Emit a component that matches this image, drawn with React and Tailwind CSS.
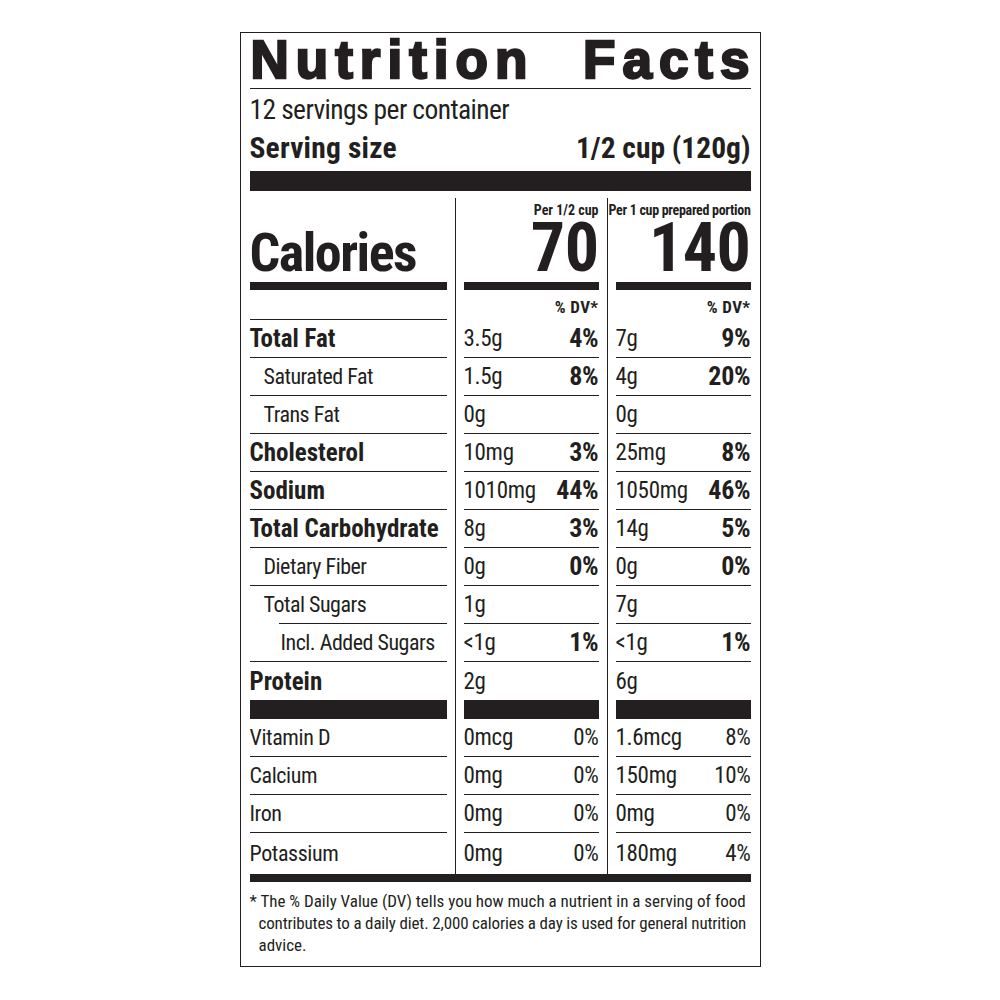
const cond = "font-['Roboto_Condensed','Liberation_Sans_Narrow','Liberation_Sans',sans-serif]"

const nutrients = [
  { label: 'Total Fat', bold: true, a: '3.5g', ap: '4%', b: '7g', bp: '9%' },
  { label: 'Saturated Fat', indent: 1, a: '1.5g', ap: '8%', b: '4g', bp: '20%' },
  { label: 'Trans Fat', indent: 1, a: '0g', b: '0g' },
  { label: 'Cholesterol', bold: true, a: '10mg', ap: '3%', b: '25mg', bp: '8%' },
  { label: 'Sodium', bold: true, a: '1010mg', ap: '44%', b: '1050mg', bp: '46%' },
  { label: 'Total Carbohydrate', bold: true, a: '8g', ap: '3%', b: '14g', bp: '5%' },
  { label: 'Dietary Fiber', indent: 1, a: '0g', ap: '0%', b: '0g', bp: '0%' },
  { label: 'Total Sugars', indent: 1, a: '1g', b: '7g', shortLine: true },
  { label: 'Incl. Added Sugars', indent: 2, a: '<1g', ap: '1%', b: '<1g', bp: '1%' },
  { label: 'Protein', bold: true, a: '2g', b: '6g', noLine: true },
]

const vitamins = [
  { label: 'Vitamin D', a: '0mcg', ap: '0%', b: '1.6mcg', bp: '8%' },
  { label: 'Calcium', a: '0mg', ap: '0%', b: '150mg', bp: '10%' },
  { label: 'Iron', a: '0mg', ap: '0%', b: '0mg', bp: '0%' },
  { label: 'Potassium', a: '0mg', ap: '0%', b: '180mg', bp: '4%', last: true },
]

// vertical divider between the label column and the two value columns
function Rule({ top = false }) {
  return (
    <div className={`w-[17px] flex justify-center ${top ? 'pt-[7px]' : ''}`}>
      <div className="w-px bg-[#231f20]" />
    </div>
  )
}

function Cell({ width, line = true, lineIndent = '', children }) {
  return (
    <div className={`flex flex-col ${width}`}>
      <div className="flex-1 flex items-center justify-between">{children}</div>
      {line && <div className={`h-px bg-[#231f20] ${lineIndent}`} />}
    </div>
  )
}

function Amount({ value, pct, boldPct }) {
  return (
    <>
      <span className="text-[23px] leading-[37px] tracking-[-0.3px]">{value}</span>
      {pct && (
        <span
          className={
            boldPct
              ? 'text-[26px] leading-[37px] font-bold tracking-[-0.2px]'
              : 'text-[23px] leading-[37px] tracking-[-0.3px]'
          }
        >
          {pct}
        </span>
      )}
    </>
  )
}

function NutrientRow({ n }) {
  const indent = n.indent === 2 ? 'pl-[31px]' : n.indent === 1 ? 'pl-[14px]' : ''
  const line = !n.noLine
  return (
    <div className="flex h-[38px]">
      <Cell width="w-[197px]" line={line} lineIndent={n.shortLine ? 'ml-[29px]' : ''}>
        <span
          className={`${indent} ${
            n.bold ? 'text-[25px] font-bold' : 'text-[22px] tracking-[-0.5px]'
          } leading-[37px] whitespace-nowrap`}
        >
          {n.label}
        </span>
      </Cell>
      <Rule />
      <Cell width="w-[135px]" line={line}>
        <Amount value={n.a} pct={n.ap} boldPct />
      </Cell>
      <Rule />
      <Cell width="w-[135px]" line={line}>
        <Amount value={n.b} pct={n.bp} boldPct />
      </Cell>
    </div>
  )
}

function VitaminRow({ v }) {
  return (
    <div className={`flex ${v.last ? 'h-[41px]' : 'h-[38px]'}`}>
      <Cell width="w-[197px]" line={!v.last}>
        <span className="text-[22px] leading-[37px] tracking-[-0.4px]">{v.label}</span>
      </Cell>
      <Rule />
      <Cell width="w-[135px]" line={!v.last}>
        <Amount value={v.a} pct={v.ap} />
      </Cell>
      <Rule />
      <Cell width="w-[135px]" line={!v.last}>
        <Amount value={v.b} pct={v.bp} />
      </Cell>
    </div>
  )
}

export default function App() {
  return (
    <div className="min-h-screen bg-white pt-[32px]">
      <div className={`mx-auto w-[521px] border border-[#231f20] px-[9px] pt-[2px] pb-[10px] text-[#231f20] ${cond}`}>
        {/* Title */}
        <div className="flex justify-between font-['Liberation_Sans',Arial,sans-serif] font-bold text-[53px] leading-[50px] tracking-[7px] [-webkit-text-stroke:2.4px_#231f20]">
          <span className="ml-[1px]">Nutrition</span>
          <span className="mr-[-6px]">Facts</span>
        </div>
        <div className="mt-[3px] h-px bg-[#231f20]" />

        <div className="mt-[4px] text-[27.5px] leading-[34px] tracking-[-0.6px]">12 servings per container</div>
        <div className="mt-[3px] flex justify-between text-[29.5px] leading-[36px] font-bold">
          <span className="tracking-[0.2px]">Serving size</span>
          <span>1/2 cup (120g)</span>
        </div>
        <div className="mt-[5px] h-[20px] bg-[#231f20]" />

        {/* Calories */}
        <div className="flex">
          <div className="w-[197px] flex flex-col justify-end">
            <div className="text-[54px] leading-[52px] font-bold tracking-[-1.5px]">Calories</div>
            <div className="mt-[3px] h-[8px] bg-[#231f20]" />
          </div>
          <Rule top />
          <div className="w-[135px] flex flex-col pt-[11px]">
            <div className="text-right text-[14px] leading-[16px] font-bold whitespace-nowrap">Per 1/2 cup</div>
            <div className="text-right text-[68px] leading-[61px] font-bold tracking-[-0.5px]">70</div>
            <div className="mt-[3px] h-[8px] bg-[#231f20]" />
          </div>
          <Rule top />
          <div className="w-[135px] flex flex-col pt-[11px]">
            <div className="flex justify-end">
              <span className="text-[14px] leading-[16px] font-bold whitespace-nowrap tracking-[-0.3px]">
                Per 1 cup prepared portion
              </span>
            </div>
            <div className="text-right text-[68px] leading-[61px] font-bold tracking-[-0.5px]">140</div>
            <div className="mt-[3px] h-[8px] bg-[#231f20]" />
          </div>
        </div>

        {/* % DV header */}
        <div className="flex h-[30px]">
          <Cell width="w-[197px]" />
          <Rule />
          <Cell width="w-[135px]">
            <span className="ml-auto text-[17px] leading-[29px] pt-[3px] font-bold tracking-[0.4px]">% DV*</span>
          </Cell>
          <Rule />
          <Cell width="w-[135px]">
            <span className="ml-auto text-[17px] leading-[29px] pt-[3px] font-bold tracking-[0.4px]">% DV*</span>
          </Cell>
        </div>

        {nutrients.map(n => (
          <NutrientRow key={n.label} n={n} />
        ))}

        {/* Thick divider before vitamins */}
        <div className="flex h-[19px]">
          <div className="w-[197px] bg-[#231f20]" />
          <Rule />
          <div className="w-[135px] bg-[#231f20]" />
          <Rule />
          <div className="w-[135px] bg-[#231f20]" />
        </div>

        {vitamins.map(v => (
          <VitaminRow key={v.label} v={v} />
        ))}
        <div className="h-[8px] bg-[#231f20]" />

        {/* Footnote */}
        <p className="mt-[8px] text-[17px] leading-[22px] whitespace-nowrap">
          <span className="block">* The % Daily Value (DV) tells you how much a nutrient in a serving of food</span>
          <span className="block pl-[9px] tracking-[-0.16px]">
            contributes to a daily diet. 2,000 calories a day is used for general nutrition
          </span>
          <span className="block pl-[9px]">advice.</span>
        </p>
      </div>
    </div>
  )
}
